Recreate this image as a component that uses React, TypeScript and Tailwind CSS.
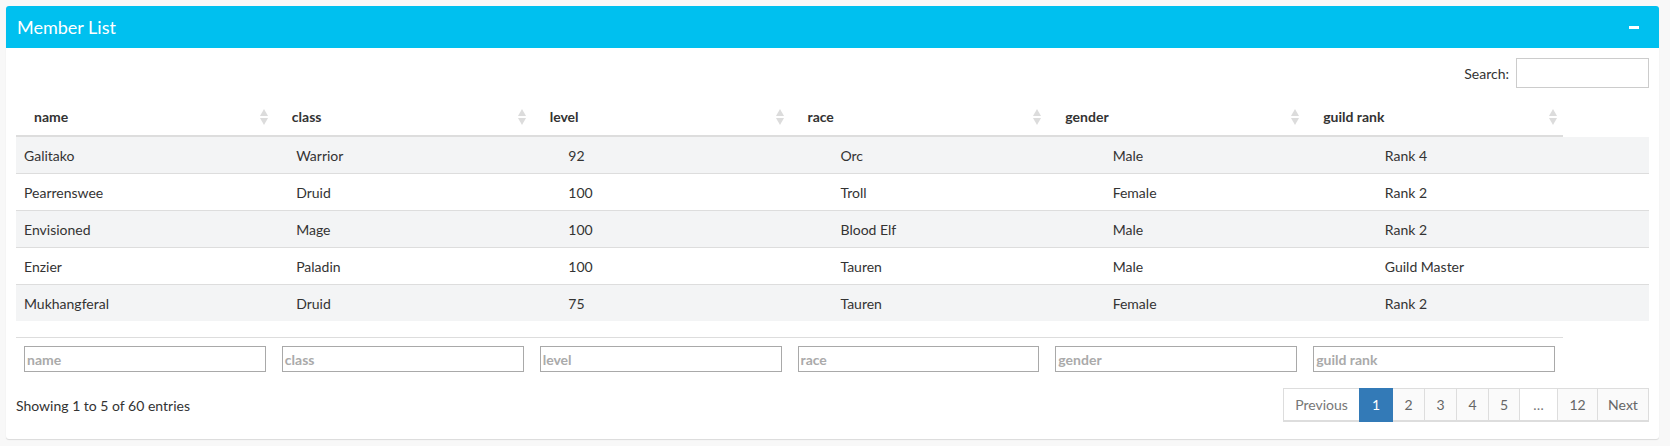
import React from "react";

const cols = ["name", "class", "level", "race", "gender", "guild rank"];
const rows = [
  ["Galitako", "Warrior", "92", "Orc", "Male", "Rank 4"],
  ["Pearrenswee", "Druid", "100", "Troll", "Female", "Rank 2"],
  ["Envisioned", "Mage", "100", "Blood Elf", "Male", "Rank 2"],
  ["Enzier", "Paladin", "100", "Tauren", "Male", "Guild Master"],
  ["Mukhangferal", "Druid", "75", "Tauren", "Female", "Rank 2"],
];

function SortIcon() {
  return (
    <svg width="8" height="16" viewBox="0 0 8 16" className="shrink-0">
      <path d="M4 0 L8 7 L0 7 Z" fill="#dcdcdc" />
      <path d="M0 9 L8 9 L4 16 Z" fill="#dcdcdc" />
    </svg>
  );
}

const pages: { label: string; w: string; kind: "dis" | "act" | "num" | "ell" }[] = [
  { label: "Previous", w: "w-[77px]", kind: "dis" },
  { label: "1", w: "w-[34px]", kind: "act" },
  { label: "2", w: "w-[33px]", kind: "num" },
  { label: "3", w: "w-[33px]", kind: "num" },
  { label: "4", w: "w-[33px]", kind: "num" },
  { label: "5", w: "w-[32px]", kind: "num" },
  { label: "…", w: "w-[39px]", kind: "ell" },
  { label: "12", w: "w-[41px]", kind: "num" },
  { label: "Next", w: "w-[52px]", kind: "num" },
];

export default function App() {
  return (
    <div
      className="min-h-[446px] bg-[#f8f8f8] pt-[6px] pl-[6px] text-[14px] text-[#333]"
      style={{ fontFamily: "Lato, 'Open Sans', sans-serif" }}
    >
      <div className="w-[1653px] rounded-[3px] bg-white shadow-[0_1px_1px_rgba(0,0,0,0.12)]">
        <div className="flex h-[42px] items-center justify-between rounded-t-[3px] bg-[#00c0ef] pl-[11px] pr-[20px]">
          <span className="text-[18px] text-white">Member List</span>
          <span className="block h-[3px] w-[10px] bg-white" />
        </div>
        <div className="px-[10px] pt-[10px] pb-[17px]">
          <div className="flex h-[30px] items-center justify-end">
            <span className="mr-[7px]">Search:</span>
            <div className="h-[30px] w-[133px] border border-[#ccc]" />
          </div>
          <div className="mt-[10px] grid w-[1547px] grid-cols-6 border-b-2 border-[#ddd]">
            {cols.map((c) => (
              <div key={c} className="flex h-[37px] items-center justify-between pl-[18px] pr-[6px] font-bold">
                <span>{c}</span>
                <SortIcon />
              </div>
            ))}
          </div>
          <div>
            {rows.map((r, i) => (
              <div
                key={i}
                className={
                  "grid h-[36px] grid-cols-6 items-center box-content " +
                  (i % 2 === 0 ? "bg-[#f3f4f5] " : "bg-white ") +
                  (i > 0 ? "border-t border-[#ddd]" : "")
                }
              >
                {r.map((v, j) => (
                  <div key={j} className="pl-[8px]">
                    {v}
                  </div>
                ))}
              </div>
            ))}
          </div>
          <div className="mt-[16px] grid w-[1547px] grid-cols-6 border-t border-[#ddd] py-[8px]">
            {cols.map((c) => (
              <div key={c} className="px-[8px]">
                <div className="flex h-[26px] w-full items-center border border-[#a9a9a9] pl-[2px] font-bold text-[#aaa]">
                  {c}
                </div>
              </div>
            ))}
          </div>
          <div className="mt-[8px] flex items-center justify-between">
            <span>Showing 1 to 5 of 60 entries</span>
            <div className="flex">
              {pages.map((p, i) => (
                <div
                  key={p.label}
                  className={
                    "flex h-[34px] items-center justify-center border border-b-2 " +
                    p.w +
                    (i > 0 ? " -ml-px" : "") +
                    (p.kind === "act"
                      ? " relative z-10 border-[#337ab7] bg-[#337ab7] text-white"
                      : p.kind === "num"
                      ? " border-[#ddd] bg-[#fafafa] text-[#666]"
                      : " border-[#ddd] bg-white text-[#777]")
                  }
                >
                  {p.label}
                </div>
              ))}
            </div>
          </div>
        </div>
      </div>
    </div>
  );
}
